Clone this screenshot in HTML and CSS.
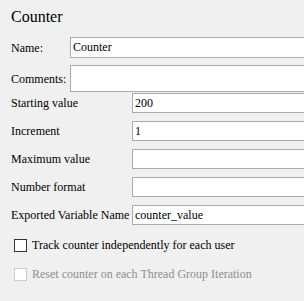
FILE: index.html
```html
<!DOCTYPE html>
<html lang="en">
<head>
    <meta charset="UTF-8">
    <title>Counter</title>
    <link rel="stylesheet" href="styles.css">
</head>
<body>
    <div class="panel">
        <h1 class="title">Counter</h1>
        <div class="top-fields">
            <label class="label">Name:</label>
            <div class="field name-field">Counter</div>
            <label class="label">Comments:</label>
            <div class="field comments-field"></div>
        </div>
        <div class="value-fields">
            <label class="label">Starting value</label>
            <div class="field">200</div>
            <label class="label">Increment</label>
            <div class="field">1</div>
            <label class="label">Maximum value</label>
            <div class="field"></div>
            <label class="label">Number format</label>
            <div class="field"></div>
            <label class="label">Exported Variable Name</label>
            <div class="field">counter_value</div>
        </div>
        <div class="checks">
            <div class="check">
                <span class="box"></span>
                <span>Track counter independently for each user</span>
            </div>
            <div class="check disabled">
                <span class="box"></span>
                <span>Reset counter on each Thread Group Iteration</span>
            </div>
        </div>
    </div>
</body>
</html>
```

FILE: styles.css
```css
* {
    margin: 0;
    padding: 0;
    box-sizing: border-box;
}
html, body {
    background-color: #f0f0f0;
}
body {
    font-family: "Liberation Serif", "Times New Roman", Times, "DejaVu Serif", serif;
    font-size: 12px;
    color: #000;
}
.panel {
    width: 304px;
    padding-left: 11px;
}
.title {
    font-family: "Liberation Serif", "Times New Roman", serif;
    font-size: 16px;
    font-weight: normal;
    line-height: 20px;
    padding-top: 7px;
    height: 37px;
}
.top-fields {
    display: grid;
    grid-template-columns: 59px 1fr;
    grid-template-rows: 21px 27px;
    row-gap: 7px;
    align-items: center;
}
.value-fields {
    display: grid;
    grid-template-columns: 121px 1fr;
    grid-auto-rows: 20px;
    row-gap: 8px;
    align-items: center;
    margin-top: 1px;
}
.label {
    line-height: 20px;
    white-space: nowrap;
}
.field {
    height: 100%;
    background: white;
    border: 1px solid #ababab;
    border-right: none;
    padding: 0 2px;
    line-height: 18px;
    white-space: nowrap;
}
.checks {
    margin-top: 13px;
    padding-left: 3px;
}
.check {
    display: flex;
    align-items: center;
    gap: 5px;
    height: 14px;
    margin-bottom: 15px;
    white-space: nowrap;
}
.box {
    flex: none;
    width: 13px;
    height: 13px;
    border: 1px solid #333;
    background: white;
}
.check.disabled {
    color: #8f8f8f;
}
.check.disabled .box {
    border-color: #cccccc;
}
```
